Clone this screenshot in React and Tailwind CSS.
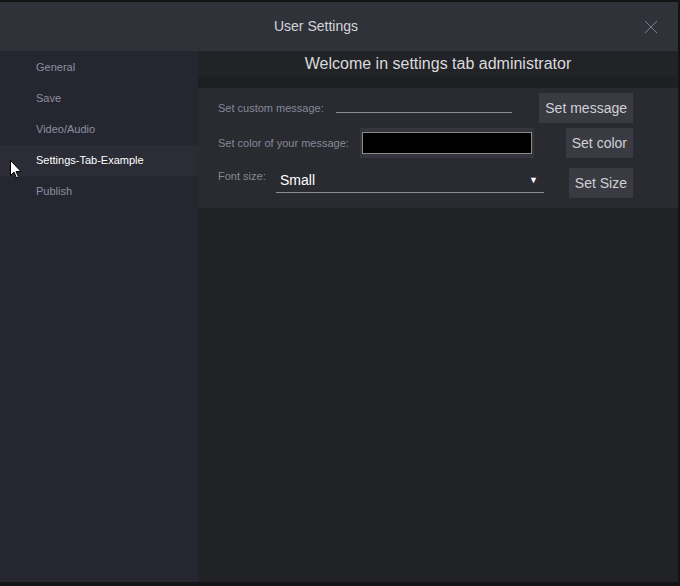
import React from "react"

const tabs = ["General", "Save", "Video/Audio", "Settings-Tab-Example", "Publish"]

function Cursor() {
  return (
    <svg className="absolute left-[10px] top-[158px]" width="12" height="19" viewBox="0 0 12 19">
      <path d="M0.5 0.5 L0.5 15.5 L4 12 L6.5 18 L8.5 17 L6 11.5 L11 11.5 Z" fill="#fff" stroke="#000" strokeWidth="1" />
    </svg>
  )
}

function Btn({ children, className = "" }) {
  return (
    <button className={"h-[30px] px-[6px] bg-[#393a42] text-[#d0d1d5] text-[14px] " + className}>
      {children}
    </button>
  )
}

export default function App() {
  return (
    <div className="w-[680px] h-[586px] bg-[#141416] pt-[2px] pr-[2px] pb-[4px] font-['Liberation_Sans',Arial,sans-serif]">
      <div className="relative h-full flex flex-col bg-[#212226]">
        <div className="h-[49px] shrink-0 bg-[#30323a] flex items-center justify-center pr-[46px] relative">
          <span className="text-[14px] text-[#d4d5d9]">User Settings</span>
          <svg className="absolute right-[20px] top-[18px]" width="14" height="14" viewBox="0 0 14 14">
            <path d="M1 1 L13 13 M13 1 L1 13" stroke="#7b7f92" strokeWidth="1" />
          </svg>
        </div>
        <div className="flex flex-1 min-h-0">
          <div className="w-[198px] shrink-0 bg-[#25262f] pt-[1px]">
            {tabs.map((t) => {
              const active = t === "Settings-Tab-Example"
              return (
                <div
                  key={t}
                  className={
                    "h-[31px] flex items-center pl-[36px] text-[11px] " +
                    (active ? "bg-[#2b2c35] text-white" : "text-[#8d90a0]")
                  }
                >
                  {t}
                </div>
              )
            })}
          </div>
          <div className="flex-1 flex flex-col">
            <div className="h-[25px] bg-[#222327] flex items-center justify-center text-[16px] text-[#d9dadd]">
              Welcome in settings tab administrator
            </div>
            <div className="h-[12px] bg-[#1e1f23]" />
            <div className="h-[120px] bg-[#2a2b31] pl-[20px] pr-[45px] pt-[5px] flex flex-col">
              <div className="flex items-center h-[30px]">
                <span className="text-[11px] text-[#858898] w-[118px]">Set custom message:</span>
                <div className="w-[176px] h-[20px] border-b border-[#8a8c96] self-start" />
                <Btn className="ml-auto">Set message</Btn>
              </div>
              <div className="flex items-center h-[30px] mt-[5px]">
                <span className="text-[11px] text-[#858898] w-[142px]">Set color of your message:</span>
                <div className="w-[174px] h-[30px] bg-[#35363d] flex items-center px-[2px]">
                  <div className="w-full h-[22px] bg-black border border-[#8a8a8a]" />
                </div>
                <Btn className="ml-auto">Set color</Btn>
              </div>
              <div className="flex items-center h-[30px] mt-[10px]">
                <span className="text-[11px] text-[#858898] w-[58px] self-start">Font size:</span>
                <div className="w-[268px] h-[24px] border-b border-[#8a8c96] flex items-center pl-[4px] pr-[6px] self-start mt-[1px]">
                  <span className="text-[14px] text-white">Small</span>
                  <span className="ml-auto text-[9px] text-white">▼</span>
                </div>
                <Btn className="ml-auto">Set Size</Btn>
              </div>
            </div>
          </div>
        </div>
        <Cursor />
      </div>
    </div>
  )
}
